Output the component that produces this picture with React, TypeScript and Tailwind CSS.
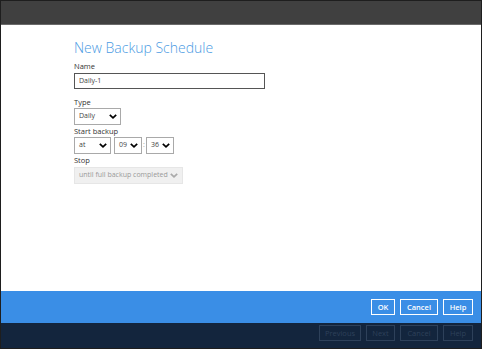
import React from "react";

function Chevron({ className = "" }: { className?: string }) {
  return (
    <svg viewBox="0 0 10 6" className={`shrink-0 ${className}`} width="8" height="5">
      <path d="M1 1l4 3.6L9 1" fill="none" stroke="currentColor" strokeWidth="2.2" />
    </svg>
  );
}

function Select({ value, width }: { value: string; width: string }) {
  return (
    <div
      className={`flex h-[17px] shrink-0 items-center justify-between whitespace-nowrap border border-[#a9a9a9] bg-white pl-[4px] pr-[3px] text-[7px] text-[#444] ${width}`}
    >
      <span>{value}</span>
      <Chevron className="text-black" />
    </div>
  );
}

export default function App() {
  return (
    <div
      className="flex h-[349px] w-[482px] flex-col border border-[#1e1e1e] bg-white"
      style={{ fontFamily: '"Open Sans", "Noto Sans", sans-serif' }}
    >
      {/* Top bar */}
      <div className="h-[24px] shrink-0 border-b border-[#6a6a6a] bg-[#404040]" />

      {/* Form */}
      <div className="min-h-0 flex-1 px-[73px] pt-[14px]">
        <h1 className="text-[14px] font-light leading-[18px] text-[#4b9be3]">
          New Backup Schedule
        </h1>

        <div className="mt-[4px] text-[7.5px] leading-[11px] text-[#333]">Name</div>
        <div className="mt-[1px] flex h-[16px] w-[191px] items-center border border-[#555] px-[4px] text-[7px] text-[#444]">
          Daily-1
        </div>

        <div className="mt-[8px] text-[7.5px] leading-[11px] text-[#333]">Type</div>
        <Select value="Daily" width="w-[47px]" />

        <div className="mt-[1px] text-[7.5px] leading-[11px] text-[#333]">Start backup</div>
        <div className="flex items-center">
          <Select value="at" width="w-[37px]" />
          <div className="w-[3px]" />
          <Select value="09" width="w-[28px]" />
          <span className="w-[4px] text-center text-[7px] text-[#999]">:</span>
          <Select value="36" width="w-[28px]" />
        </div>

        <div className="mt-[1px] text-[7.5px] leading-[11px] text-[#333]">Stop</div>
        <div className="mt-[1px] flex h-[17px] w-[109px] items-center justify-between whitespace-nowrap border border-[#e6e6e6] bg-[#f0f0f0] pl-[4px] pr-[4px] text-[7px] text-[#9a9a9a]">
          <span>until full backup completed</span>
          <Chevron className="text-[#aaa]" />
        </div>
      </div>

      {/* Blue action bar */}
      <div className="flex h-[32px] shrink-0 items-start justify-end gap-[5px] bg-[#3a8ee6] pr-[8px] pt-[8px]">
        {[
          ["OK", "w-[24px]"],
          ["Cancel", "w-[38px]"],
          ["Help", "w-[30px]"],
        ].map(([label, w]) => (
          <button
            key={label}
            className={`h-[16px] border border-white text-center text-[7.5px] font-semibold leading-[14px] text-white ${w}`}
          >
            {label}
          </button>
        ))}
      </div>

      {/* Dark wizard bar */}
      <div className="flex h-[25px] shrink-0 items-start justify-end gap-[5px] bg-[#13253d] pr-[8px] pt-[2px]">
        {[
          ["Previous", "w-[42px]"],
          ["Next", "w-[29px]"],
          ["Cancel", "w-[38px]"],
          ["Help", "w-[30px]"],
        ].map(([label, w]) => (
          <button
            key={label}
            className={`h-[16px] border border-[#2e415a] text-center text-[7.5px] leading-[14px] text-[#2e415a] ${w}`}
          >
            {label}
          </button>
        ))}
      </div>
    </div>
  );
}
